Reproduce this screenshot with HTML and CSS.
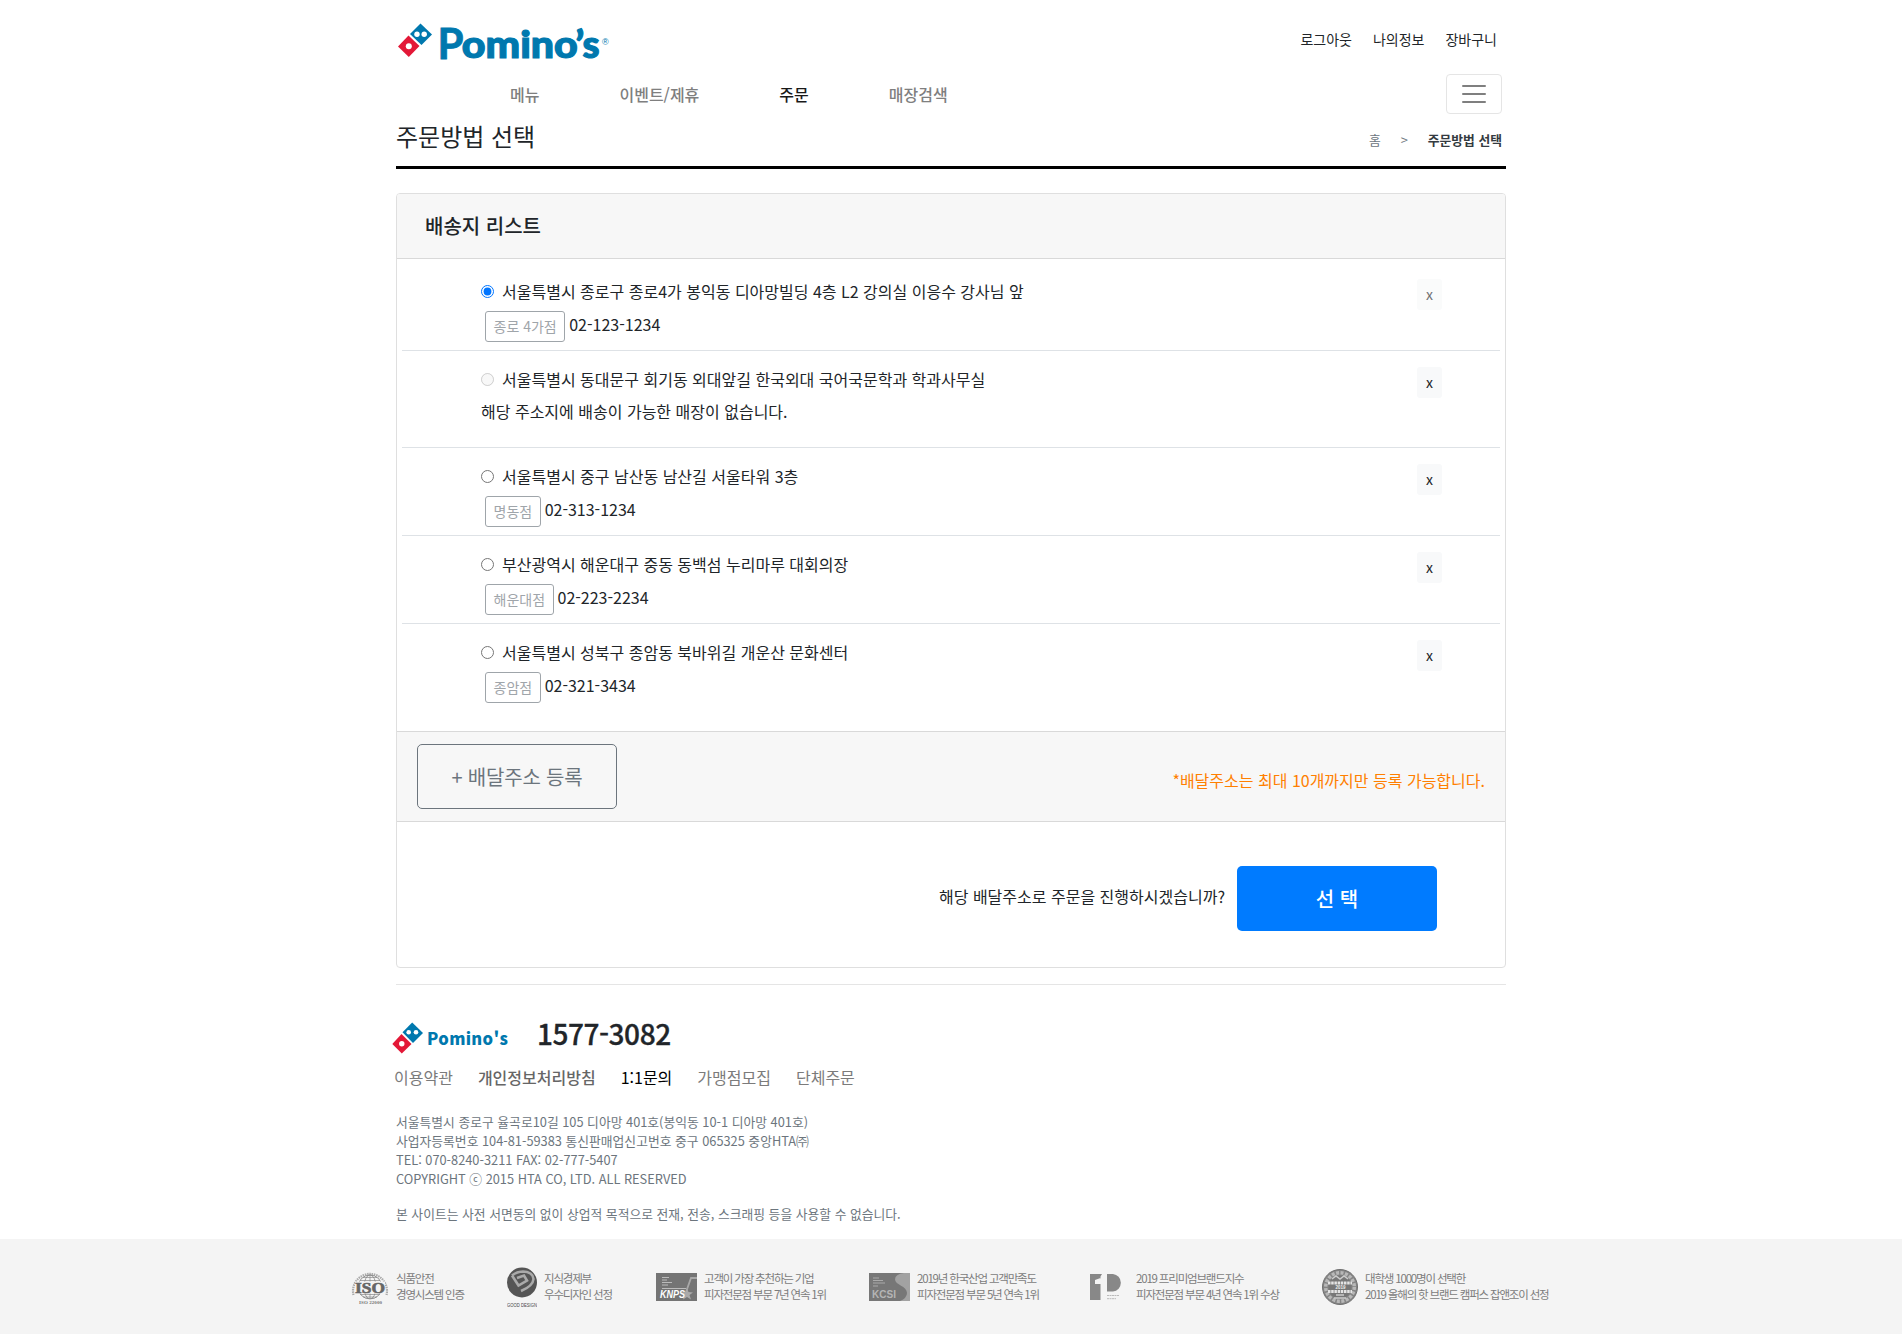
FILE: index.html
```html
<!DOCTYPE html>
<html lang="ko">
<head>
<meta charset="utf-8">
<title>주문방법 선택</title>
<link rel="stylesheet" href="styles.css">
</head>
<body>
<div class="container">
  <header>
    <div class="top">
      <svg class="logo" width="216" height="52" viewBox="0 -6 216 52">
        <g transform="translate(2 3)">
          <path d="M22.5 .5 34 11.5 23.5 22 12 11Z" fill="#0078ae"/>
          <path d="M10.5 12.5 21.5 23 10.8 34 0 23.5Z" fill="#e31837"/>
          <circle cx="19" cy="11.2" r="2.7" fill="#fff"/><circle cx="26.2" cy="11.2" r="2.7" fill="#fff"/><circle cx="10.8" cy="23.3" r="3" fill="#fff"/>
        </g>
        <text class="wordmark cap" y="38.500" x="41.500">P</text>
        <text class="wordmark" y="38" x="65.800" textLength="116" lengthAdjust="spacingAndGlyphs">omino</text>
        <text class="wordmark" y="38" x="179.500 186.500">’s</text>
        <text class="reg" x="206" y="25">®</text>
      </svg>
      <ul class="user-links"><li>로그아웃</li><li>나의정보</li><li>장바구니</li></ul>
    </div>
    <nav class="nav">
      <ul><li>메뉴</li><li>이벤트/제휴</li><li class="active">주문</li><li>매장검색</li></ul>
      <button class="toggler" type="button"><span></span><span></span><span></span></button>
    </nav>
  </header>
  <div class="page-title">
    <h2>주문방법 선택</h2>
    <ol><li>홈</li><li>&gt;</li><li class="current">주문방법 선택</li></ol>
  </div>

  <main class="card">
    <h5 class="card-header">배송지 리스트</h5>
    <div class="list">
      <div class="row">
        <div class="info">
          <label><input type="radio" name="addr" checked>서울특별시 종로구 종로4가 봉익동 디아망빌딩 4층 L2 강의실 이응수 강사님 앞</label>
          <div class="store"><span class="shop">종로 4가점</span>02-123-1234</div>
        </div>
        <button class="del" disabled>x</button>
      </div>
      <div class="row tall">
        <div class="info">
          <label><input type="radio" name="addr" disabled>서울특별시 동대문구 회기동 외대앞길 한국외대 국어국문학과 학과사무실</label>
          <p class="none">해당 주소지에 배송이 가능한 매장이 없습니다.</p>
        </div>
        <button class="del">x</button>
      </div>
      <div class="row">
        <div class="info">
          <label><input type="radio" name="addr">서울특별시 중구 남산동 남산길 서울타워 3층</label>
          <div class="store"><span class="shop">명동점</span>02-313-1234</div>
        </div>
        <button class="del">x</button>
      </div>
      <div class="row">
        <div class="info">
          <label><input type="radio" name="addr">부산광역시 해운대구 중동 동백섬 누리마루 대회의장</label>
          <div class="store"><span class="shop">해운대점</span>02-223-2234</div>
        </div>
        <button class="del">x</button>
      </div>
      <div class="row">
        <div class="info">
          <label><input type="radio" name="addr">서울특별시 성북구 종암동 북바위길 개운산 문화센터</label>
          <div class="store"><span class="shop">종암점</span>02-321-3434</div>
        </div>
        <button class="del">x</button>
      </div>
    </div>
    <div class="add-bar">
      <button class="add">+ 배달주소 등록</button>
      <span class="notice">*배달주소는 최대 10개까지만 등록 가능합니다.</span>
    </div>
    <div class="confirm">
      <span>해당 배달주소로 주문을 진행하시겠습니까?</span>
      <button class="select">선 택</button>
    </div>
  </main>

  <footer class="footer">
    <div class="brand">
      <svg width="120" height="34" viewBox="0 0 120 34">
        <path d="M20.2 .5 31 11 21 21 10.5 10.3Z" fill="#0078ae"/>
        <path d="M9.5 12 19.5 22 9.8 31.5 .3 22Z" fill="#e31837"/>
        <circle cx="16.7" cy="10.3" r="2.3" fill="#fff"/><circle cx="24" cy="10.3" r="2.3" fill="#fff"/><circle cx="9.8" cy="21.8" r="2.7" fill="#fff"/>
        <text class="mini-mark" x="35" y="22.500" textLength="81">Pomino's</text>
      </svg>
      <strong class="tel">1577-3082</strong>
    </div>
    <ul class="foot-links"><li>이용약관</li><li class="bold">개인정보처리방침</li><li class="dark">1:1문의</li><li>가맹점모집</li><li>단체주문</li></ul>
    <address>서울특별시 종로구 율곡로10길 105 디아망 401호(봉익동 10-1 디아망 401호)<br>사업자등록번호 104-81-59383 통신판매업신고번호 중구 065325 중앙HTA㈜<br>TEL: 070-8240-3211 FAX: 02-777-5407<br>COPYRIGHT ⓒ 2015 HTA CO, LTD. ALL RESERVED</address>
    <p class="legal">본 사이트는 사전 서면동의 없이 상업적 목적으로 전재, 전송, 스크래핑 등을 사용할 수 없습니다.</p>
  </footer>
</div>

<div class="awards">
  <div class="award w1">
    <svg width="38" height="40" viewBox="0 0 38 40">
      <g fill="none" stroke="#888"><path d="M2.5 27A17 17 0 1 1 35.500 27" stroke="#aaa" stroke-width="2.200" stroke-dasharray="1.500 .8"/><circle cx="19" cy="19" r="12" stroke-width=".9"/><ellipse cx="19" cy="19" rx="6" ry="12" stroke-width=".8"/><path d="M19 7V31M9 12.500H29M9 26.500H29M12 9.500H26M12 29H26" stroke-width=".7"/></g>
      <path d="M4 13.500H34V25.500H4Z" fill="#f4f4f4"/>
      <text class="iso" x="4" y="24.500" textLength="30" lengthAdjust="spacingAndGlyphs">ISO</text>
      <rect x="6" y="31.500" width="26" height="6" fill="#f4f4f4"/>
      <text class="iso-no" x="8" y="36" textLength="23">ISO 22000</text>
    </svg>
    <p>식품안전<br>경영시스템 인증</p>
  </div>
  <div class="award w2">
    <svg width="30" height="42" viewBox="0 0 30 42">
      <circle cx="15" cy="15.500" r="15" fill="#555"/>
      <path d="M5 8.500Q10 4.500 16 4.500Q26 5 26.500 12Q26 19 14 24M5 8.500 11.500 18.500 20 13.500 17 8.500 10 11" fill="none" stroke="#aaa" stroke-width="2.600"/>
      <text class="gd" x="0" y="40" textLength="30" lengthAdjust="spacingAndGlyphs">GOOD DESIGN</text>
    </svg>
    <p>지식경제부<br>우수디자인 선정</p>
  </div>
  <div class="award w3">
    <svg width="41" height="28" viewBox="0 0 41 28">
      <rect width="41" height="28" fill="#747474"/>
      <path d="M6 4.500H13M6 7H11M6 9.500H16M6 12H12M6 15.500H30" stroke="#bbb"/>
      <path d="M30 19 35 5H41" fill="none" stroke="#a8a8a8" stroke-width="1.800"/>
      <path d="M31 15 32.500 19 37 19.500 33.500 22 35 26.500 31 24 27 26.500 28 22 25 19.500 29.500 19Z" fill="#aaa"/>
      <text class="knps" x="4" y="25" textLength="25" lengthAdjust="spacingAndGlyphs">KNPS</text>
    </svg>
    <p>고객이 가장 추천하는 기업<br>피자전문점 부문 7년 연속 1위</p>
  </div>
  <div class="award w4">
    <svg width="41" height="28" viewBox="0 0 41 28">
      <rect width="41" height="28" fill="#777"/>
      <path d="M41 0V28H31Q38 25 38 20C38 13 26 12 26 6.500Q26 1 35 0Z" fill="#a2a2a2"/>
      <path d="M4 5H10M4 7.500H14M4 10H16M4 13H9" stroke="#aaa"/>
      <text class="kcsi" x="3" y="24.500" textLength="24" lengthAdjust="spacingAndGlyphs">KCSI</text>
    </svg>
    <p>2019년 한국산업 고객만족도<br>피자전문점 부문 5년 연속 1위</p>
  </div>
  <div class="award w5">
    <svg width="33" height="28" viewBox="0 0 33 28">
      <path d="M0 1H12L10.500 3.500V27H0ZM5 7V11H10.500V5Z" fill="#888" fill-rule="evenodd"/>
      <path d="M17 1H23A8.800 8.800 0 0 1 23 18.500H17Z" fill="#888"/>
      <path d="M17 22.500H29M17 25.700H26" stroke="#bbb" stroke-dasharray="2 .5"/>
    </svg>
    <p>2019 프리미엄브랜드지수<br>피자전문점 부문 4년 연속 1위 수상</p>
  </div>
  <div class="award w6">
    <svg width="36" height="36" viewBox="0 0 36 36">
      <circle cx="18" cy="18" r="17.500" fill="#858585" stroke="#707070"/>
      <circle cx="18" cy="18" r="14.300" fill="none" stroke="#b8b8b8" stroke-width="3.500" stroke-dasharray="3 1.500"/>
      <circle cx="18" cy="18" r="11.500" fill="#777"/>
      <path d="M10 10 14 7 18 10 22 7 26 10M12 29H24M14 26H22" fill="none" stroke="#ccc" stroke-width="1.500"/>
      <path d="M6 14H30M6 22.500H30" stroke="#e4e4e4" stroke-width="3" stroke-dasharray="2.500 .7"/>
      <text class="hot" x="13.500" y="20.300">2019</text>
    </svg>
    <p>대학생 1000명이 선택한<br>2019 올해의 핫 브랜드 캠퍼스 잡앤조이 선정</p>
  </div>
</div>
</body>
</html>
```
FILE: styles.css
```css
* { box-sizing: border-box; }
body {
  margin: 0;
  font: 400 16px/1.5 "Noto Sans CJK KR", sans-serif;
  color: #212529;
  background: #fff;
}
ul, ol { list-style: none; margin: 0; padding: 0; display: flex; }
h2, h5, p { margin: 0; }
button { font-family: inherit; margin: 0; }
.container { width: 1110px; margin: 0 auto; }

.top { display: flex; justify-content: space-between; height: 74px; padding: 14px 9px 0 0; }
.wordmark { font: 900 38.500px Lato, sans-serif; fill: #0078ae; stroke: #0078ae; stroke-width: 1.200px; }
.wordmark.cap { font-size: 42px; font-weight: 700; stroke-width: .8px; }
.reg { font: 9px "Liberation Sans", sans-serif; fill: #0078ae; }
.user-links { gap: 21px; font-size: 14px; line-height: 21px; padding-top: 15px; }
.nav { display: flex; justify-content: space-between; height: 40px; padding: 0 4px 0 114px; }
.nav ul { gap: 80px; align-items: center; font-weight: 500; color: #7f7f7f; }
.nav .active { color: #191919; }
.toggler {
  width: 56px; height: 40px; padding: 0;
  display: flex; flex-direction: column; align-items: center; justify-content: center; gap: 6px;
  background: none; border: 1px solid #e5e5e5; border-radius: 4px;
}
.toggler span { width: 24px; height: 2px; background: #7f7f7f; border-radius: 1px; }
.page-title {
  display: flex; justify-content: space-between;
  height: 55px; padding: 4px 4px 0 0; border-bottom: 3px solid #000;
}
.page-title h2 { font-size: 24px; line-height: 36px; font-weight: 400; }
.page-title ol { gap: 20px; padding-top: 12px; font-size: 12.800px; line-height: 20px; color: #6c757d; }
.page-title .current { color: #343a40; font-weight: 700; }

.card { margin-top: 24px; height: 775px; border: 1px solid #dfdfdf; border-radius: 4px; }
.card-header {
  height: 65px; padding: 17px 28px 0; font-size: 20px; line-height: 30px; font-weight: 500;
  background: #f7f7f7; border-bottom: 1px solid #d9d9d9; border-radius: 3px 3px 0 0;
}
.list { height: 472px; padding: 4px 5px 0; }
.row { display: flex; justify-content: space-between; height: 88px; padding: 16px 58px 0 79px; border-bottom: 1px solid #dee2e6; }
.row.tall { height: 97px; }
.row:last-child { border-bottom: 0; }
.info label { display: flex; align-items: center; height: 24px; }
.info input { width: 13px; height: 13px; margin: 0 8px 0 0; }
.none { margin-top: 8px; }
.store { display: flex; height: 31px; margin: 8px 0 0 4px; gap: 4px; line-height: 26px; }
.shop {
  height: 31px; padding: 4px 7.500px 0; font-size: 14px; line-height: 21px;
  color: #9fa5aa; border: 1px solid #9fa5aa; border-radius: 3px;
}
.del { width: 25px; height: 31px; padding: 0; font-size: 14px; line-height: 21px; color: #212529; background: #f8f9fa; border: 0; border-radius: 3px; }
.del:disabled { opacity: .65; }
.add-bar {
  display: flex; justify-content: space-between; height: 91px; padding: 12px 20px 0;
  background: #f7f7f7; border-top: 1px solid #d9d9d9; border-bottom: 1px solid #d9d9d9;
}
.add, .select { width: 200px; height: 65px; padding: 0; font-size: 20px; border-radius: 5px; }
.add { color: #6c757d; background: none; border: 1px solid #6c757d; letter-spacing: -.2px; }
.notice { padding-top: 24px; color: #ff7f00; }
.confirm { display: flex; justify-content: flex-end; gap: 12px; padding: 44px 68px 0 0; }
.confirm span { padding-top: 18px; }
.select { color: #fff; background: #007bff; border: 0; font-weight: 500; }

.footer { margin-top: 16px; height: 255px; border-top: 1px solid #e5e5e5; }
.brand { display: flex; gap: 25px; margin: 37px 0 0 -4px; height: 40px; }
.mini-mark { font: 900 16.500px "Noto Sans CJK KR", sans-serif; fill: #0078ae; }
.tel { font-size: 28px; line-height: 34px; margin-top: -6px; font-weight: 500; letter-spacing: -.45px; -webkit-text-stroke: .3px #212529; }
.foot-links { gap: 25px; margin: 3px 0 0 -2px; color: #7b7b7b; }
.foot-links .bold { font-weight: 500; color: #666; }
.foot-links .dark { color: #000; }
address { margin-top: 23px; font-size: 12.800px; line-height: 19px; font-style: normal; color: #6c757d; }
.legal { margin-top: 16px; font-size: 12.800px; line-height: 19px; color: #6c757d; }

.awards { display: flex; height: 95px; padding-left: 351px; background: #f4f4f4; color: #7c7c7c; }
.award { display: flex; gap: 7px; padding-top: 31px; white-space: nowrap; }
.award p { font-size: 11.500px; line-height: 16px; letter-spacing: -1.180px; }
.award svg { margin-top: 3px; flex: none; }
.w1 { width: 156px; } .w1 svg { margin-top: -2px; }
.w2 { width: 149px; } .w2 svg { margin-top: -3px; }
.w3 { width: 213px; }
.w4 { width: 221px; }
.w5 { width: 232px; gap: 13px; }
.w6 svg { margin-top: -1px; }
.iso { font: 700 14px "Liberation Serif", serif; fill: #666; stroke: #666; stroke-width: .6px; }
.iso-no { font: 700 5px "Liberation Serif", serif; fill: #777; }
.gd { font: 5px "Liberation Sans", sans-serif; fill: #444; }
.knps { font: italic 700 10px "Liberation Sans", sans-serif; fill: #fff; }
.kcsi { font: 700 10px "Liberation Sans", sans-serif; fill: #b5b5b5; }
.hot { font: 700 4.500px "Liberation Sans", sans-serif; fill: #eee; }
```
